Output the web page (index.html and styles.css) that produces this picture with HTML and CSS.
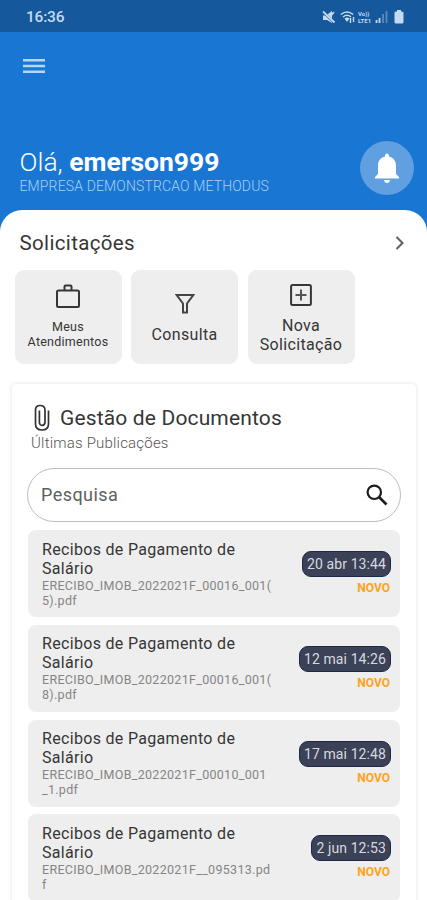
FILE: index.html
```html
<!DOCTYPE html>
<html lang="pt-BR">
<head>
<meta charset="utf-8">
<title>Methodus</title>
<link rel="stylesheet" href="styles.css">
</head>
<body>
<div class="status">
  <span class="clock">16:36</span>
  <div class="tray">
    <svg class="mute" width="14" height="14" viewBox="0 0 14 14"><path d="M1 5.500h3L10 1v12L5 10H1z" fill="currentColor"/><path d="M0 .5l13 13" stroke="#15589c" stroke-width="2.400"/><path d="M1 1.500l11.500 11M9.500 5l2.500-3" stroke="currentColor" stroke-width="1.800"/></svg>
    <svg class="wifi" width="16" height="14" viewBox="0 0 16 14"><g fill="none" stroke="currentColor" stroke-width="1.500"><path d="M.8 4.500q6.200-5 12.400 0M3 7q4-3.400 8 0"/></g><path d="M4.500 8.500q2.500-2 5 0L7 12z" fill="currentColor"/><path d="M10.500 8v5M13.500 7v5" stroke="currentColor" stroke-width="1.400"/></svg>
    <span class="volte"><b>Vo))</b><b>LTE1</b></span>
    <svg class="signal" width="13" height="13" viewBox="0 0 13 13"><path d="M1.500 10v3M4.500 8v5" stroke="currentColor" stroke-width="1.800"/><path d="M8 4v9M11.500 1v12" stroke="currentColor" stroke-width="1.800" opacity=".4"/></svg>
    <svg class="battery" width="10" height="14" viewBox="0 0 10 14"><path d="M3 0h4v1.500h1q1.500 0 1.500 1.500v9q0 1.500-1.500 1.500H2Q.5 13.500.5 12V3Q.5 1.500 2 1.500h1z" fill="currentColor"/></svg>
  </div>
</div>
<header class="header">
  <svg class="menu" width="22" height="16" viewBox="0 0 22 16"><path d="M0 2.300h22M0 8h22M0 13.700h22" stroke="currentColor" stroke-width="2.600"/></svg>
  <div class="welcome">
    <div>
      <h1 class="hello">Olá, <strong>emerson999</strong></h1>
      <p class="company">EMPRESA DEMONSTRCAO METHODUS</p>
    </div>
    <div class="bell"><svg width="26" height="31" viewBox="0 0 26 31"><path d="M13 .5q2 0 2 3c4.500 1 7 4.500 7 9V21l3 3v1.500H1V24l3-3v-8.500c0-4.500 2.500-8 7-9q0-3 2-3zM10 27h6q-.5 3-3 3t-3-3z" fill="#fff"/></svg></div>
  </div>
</header>
<main class="sheet">
  <div class="section-head">
    <h2>Solicitações</h2>
    <svg width="10" height="14" viewBox="0 0 10 14"><path d="M1.500 1l6 6-6 6" fill="none" stroke="#626262" stroke-width="2.100"/></svg>
  </div>
  <div class="tiles">
    <div class="tile small">
      <svg width="24" height="24" viewBox="0 0 24 24"><g fill="none" stroke="#363636" stroke-width="2"><rect x="1" y="6.500" width="22" height="16.500" rx="1.500"/><path d="M8.500 6V2.500Q8.500 1.500 9.500 1.500h5q1 0 1 1V6"/></g></svg>
      <span>Meus<br>Atendimentos</span>
    </div>
    <div class="tile single">
      <svg width="20" height="21" viewBox="0 0 20 21"><path d="M1.700 2h16.600L12 10.500V19.500H8V10.500z" fill="none" stroke="#444" stroke-width="2"/></svg>
      <span>Consulta</span>
    </div>
    <div class="tile">
      <svg width="22" height="22" viewBox="0 0 22 22"><rect x="1.100" y="1.100" width="19.800" height="19.800" rx="1.500" fill="none" stroke="#363636" stroke-width="2"/><path d="M11 5.500v11M5.500 11h11" stroke="#555" stroke-width="2"/></svg>
      <span>Nova<br>Solicitação</span>
    </div>
  </div>
  <section class="card">
    <div class="card-head">
      <svg width="16" height="28" viewBox="0 0 16 28"><path d="M14.500 6.500V20q0 6-6.500 6t-6.500-6V6q0-4.500 4.700-4.500T11 6v12q0 3.300-2.800 3.300T5.400 18V6.500" fill="none" stroke="#333" stroke-width="1.700"/></svg>
      <h2>Gestão de Documentos</h2>
    </div>
    <p class="subtitle">Últimas Publicações</p>
    <div class="search">
      <span>Pesquisa</span>
      <svg width="22" height="22" viewBox="0 0 22 22"><g fill="none" stroke="#1d1d1d"><circle cx="8.300" cy="8.300" r="6.700" stroke-width="2.200"/><path d="M13 13l7.500 7.500" stroke-width="2.700"/></g></svg>
    </div>
    <div class="list">
      <article class="doc">
        <div class="info"><h3>Recibos de Pagamento de<br>Salário</h3><p>ERECIBO_IMOB_2022021F_00016_001(<br>5).pdf</p></div>
        <div class="meta"><time>20 abr 13:44</time><span class="new">NOVO</span></div>
      </article>
      <article class="doc">
        <div class="info"><h3>Recibos de Pagamento de<br>Salário</h3><p>ERECIBO_IMOB_2022021F_00016_001(<br>8).pdf</p></div>
        <div class="meta"><time>12 mai 14:26</time><span class="new">NOVO</span></div>
      </article>
      <article class="doc">
        <div class="info"><h3>Recibos de Pagamento de<br>Salário</h3><p>ERECIBO_IMOB_2022021F_00010_001<br>_1.pdf</p></div>
        <div class="meta"><time>17 mai 12:48</time><span class="new">NOVO</span></div>
      </article>
      <article class="doc">
        <div class="info"><h3>Recibos de Pagamento de<br>Salário</h3><p>ERECIBO_IMOB_2022021F__095313.pd<br>f</p></div>
        <div class="meta"><time>2 jun 12:53</time><span class="new">NOVO</span></div>
      </article>
    </div>
  </section>
</main>
</body>
</html>
```
FILE: styles.css
```css
* { box-sizing: border-box; margin: 0; padding: 0; }
html { height: 900px; overflow: hidden; }
body { height: 900px; overflow: hidden; background: #1976d2; font-family: Roboto, sans-serif; color: #363636; }
svg { display: block; flex: none; }
.status { height: 32px; background: #15589c; color: #c5d9f0; display: flex; align-items: center; justify-content: space-between; padding: 1px 23px 0 26px; }
.clock { font-size: 15.5px; font-weight: 500; line-height: 20px; letter-spacing: -.2px; padding-top: 1px; }
.tray { display: flex; align-items: center; }
.wifi { margin-left: 4px; }
.volte { display: flex; flex-direction: column; margin-left: 2px; width: 16px; font-size: 6px; line-height: 7px; }
.signal { margin-left: 1px; }
.battery { margin-left: 6px; }
.header { height: 178px; color: #fff; padding: 26px 13px 0 19.500px; }
.menu { color: #b5d8fa; margin-left: 3px; }
.welcome { display: flex; justify-content: space-between; margin-top: 67px; }
.hello { font-size: 26.500px; line-height: 32px; font-weight: 300; padding-top: 5px; }
.hello strong { font-weight: 700; }
.company { font-size: 14px; line-height: 16px; font-weight: 300; color: #a9d0f7; letter-spacing: .14px; }
.bell { width: 54px; height: 54px; border-radius: 50%; background: #609fe0; display: flex; align-items: center; justify-content: center; }
.sheet { height: 690px; background: #fff; border-radius: 22px 22px 0 0; overflow: hidden; padding: 0 11px 0 12px; }
.section-head { height: 59.500px; padding: 7px 11px 0 7.500px; display: flex; align-items: center; justify-content: space-between; }
.section-head h2 { font-size: 20.500px; font-weight: 400; letter-spacing: .35px; }
.tiles { display: flex; gap: 9.500px; padding-left: 2.500px; }
.tile { width: 107px; height: 94.500px; border-radius: 9px; background: #eee; display: flex; flex-direction: column; align-items: center; padding-top: 14px; text-align: center; font-size: 16px; line-height: 19px; letter-spacing: .35px; }
.tile span { margin-top: 10px; }
.small { font-size: 12.500px; line-height: 15px; letter-spacing: .25px; }
.small span { margin-top: 11px; }
.single { padding-top: 23px; }
.single span { margin-top: 11px; }
.card { margin-top: 20px; height: 540px; border-radius: 4px; background: #fff; box-shadow: 0 0 4px rgba(0,0,0,.12); padding: 20px 15px 0; }
.card-head { display: flex; align-items: center; gap: 10.500px; padding-left: 6.500px; height: 28px; }
.card-head h2 { font-size: 21px; font-weight: 400; letter-spacing: .15px; }
.subtitle { font-size: 15px; line-height: 18px; font-weight: 300; padding-left: 4px; margin-top: 2px; color: #555; letter-spacing: .2px; }
.search { margin-top: 16px; height: 54px; border: 1px solid #bdbdbd; border-radius: 27px; display: flex; align-items: center; justify-content: space-between; padding: 0 12px 0 13px; font-size: 18px; color: #606060; letter-spacing: .45px; }
.search span { padding-bottom: 2px; }
.list { display: flex; flex-direction: column; gap: 7.500px; margin: 8px 1px 0; }
.doc { height: 87.300px; flex: none; border-radius: 8px; background: #eee; display: flex; justify-content: space-between; padding: 9.500px 9px 0 14px; }
.doc h3 { font-size: 16px; line-height: 19px; font-weight: 400; letter-spacing: .32px; white-space: nowrap; }
.doc p { font-size: 12.500px; line-height: 15px; color: #858585; letter-spacing: .3px; white-space: nowrap; }
.meta { display: flex; flex-direction: column; align-items: flex-end; padding-top: 11.500px; }
.meta time { height: 26px; border-radius: 9px; background: #3b4257; border: 1px solid #1e2847; color: #d7d9df; font-size: 14px; line-height: 24px; padding: 0 4px; letter-spacing: .1px; white-space: nowrap; }
.new { color: #ffa31a; font-size: 12px; font-weight: 700; line-height: 14px; margin: 4px 1px 0 0; }
```
